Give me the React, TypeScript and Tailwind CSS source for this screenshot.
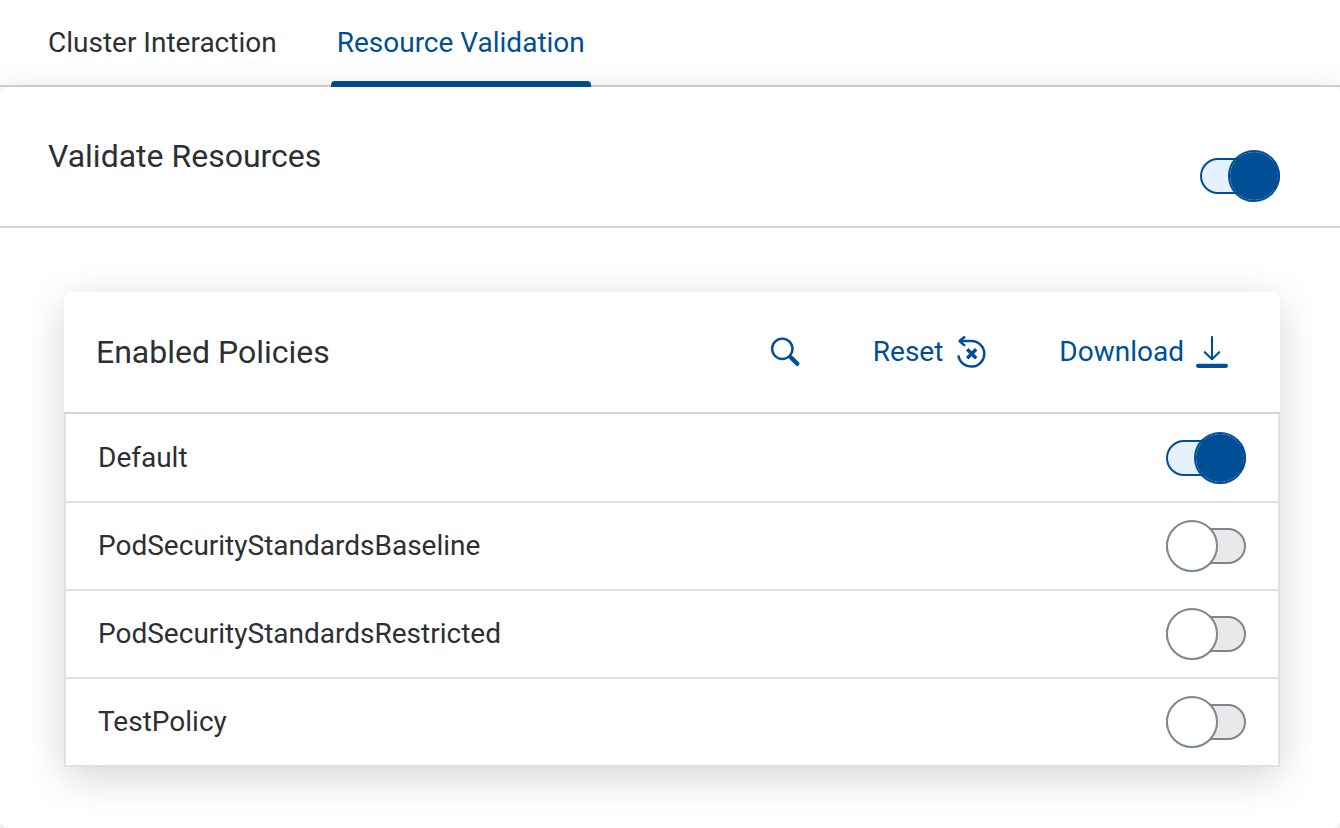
import { useState } from 'react';

const tabs = ['Cluster Interaction', 'Resource Validation'];

const initialPolicies = [
  { name: 'Default', enabled: true },
  { name: 'PodSecurityStandardsBaseline', enabled: false },
  { name: 'PodSecurityStandardsRestricted', enabled: false },
  { name: 'TestPolicy', enabled: false },
];

function SearchIcon() {
  return (
    <svg className="size-8" viewBox="0 0 32 32" fill="none" stroke="currentColor" aria-hidden="true">
      <circle cx="13.3" cy="12.8" r="10.2" strokeWidth="2.4" />
      <path d="M20.5 20.2 23 22.6" strokeWidth="3" />
      <path d="m22.3 21.9 6 5.9" strokeWidth="4.4" strokeLinecap="round" />
    </svg>
  );
}

function ResetIcon() {
  return (
    <svg
      className="size-8"
      viewBox="0 0 32 32"
      fill="none"
      stroke="currentColor"
      strokeWidth="2.5"
      strokeLinecap="round"
      strokeLinejoin="round"
      aria-hidden="true"
    >
      <path d="M3.4 19.4A13 12.8 0 1 0 16.4 5H4.8" strokeLinecap="butt" />
      <path d="M9.2 1.2 4.6 5 9.2 9.2" />
      <path d="m12.2 13.2 9 9M21.2 13.2l-9 9" strokeWidth="3.5" strokeLinecap="butt" />
    </svg>
  );
}

function DownloadIcon() {
  return (
    <svg
      className="size-8"
      viewBox="0 0 32 32"
      fill="none"
      stroke="currentColor"
      strokeWidth="2.1"
      strokeLinecap="round"
      strokeLinejoin="round"
      aria-hidden="true"
    >
      <path d="M16 1v22M8.8 16.2l7.2 7 7.2-7" />
      <path d="M2.1 29.8h27.8" strokeWidth="4.2" />
    </svg>
  );
}

type SwitchProps = {
  id: string;
  checked: boolean;
  onChange: (checked: boolean) => void;
};

function Switch({ id, checked, onChange }: SwitchProps) {
  return (
    <input
      id={id}
      type="checkbox"
      role="switch"
      checked={checked}
      onChange={(event) => onChange(event.target.checked)}
      className="grid h-13 w-20 shrink-0 cursor-pointer appearance-none items-center before:col-start-1 before:row-start-1 before:h-9 before:w-20 before:rounded-full before:border-2 before:border-[#7b8790] before:bg-[#e9e9e9] after:col-start-1 after:row-start-1 after:size-13 after:justify-self-start after:rounded-full after:border-2 after:border-[#7b8790] after:bg-white checked:before:border-[#004f96] checked:before:bg-[#e5f2fd] checked:after:justify-self-end checked:after:border-[#004f96] checked:after:bg-[#004f96] checked:after:bg-clip-padding"
    />
  );
}

export default function App() {
  const [activeTab, setActiveTab] = useState(tabs[1]);
  const [validate, setValidate] = useState(true);
  const [policies, setPolicies] = useState(initialPolicies);

  const setPolicy = (name: string, enabled: boolean) =>
    setPolicies((list) => list.map((p) => (p.name === name ? { ...p, enabled } : p)));

  return (
    <div className="flex min-h-screen flex-col overflow-hidden bg-white font-[Roboto,'Liberation_Sans',sans-serif] text-[28px] leading-9 text-[#2c3034]">
      <div role="tablist" className="flex gap-12 border-b-2 border-[#d4d4d4] px-[42px]">
        {tabs.map((tab) => (
          <button
            key={tab}
            type="button"
            role="tab"
            aria-selected={tab === activeTab}
            onClick={() => setActiveTab(tab)}
            className="group -mb-0.5 flex flex-col aria-selected:text-[#004f96]"
          >
            <span className="px-1.5 pt-[25px] pb-5">{tab}</span>
            <span className="h-1.5 w-full rounded-t group-aria-selected:bg-[#004f96]" />
          </button>
        ))}
      </div>

      <main className="grow rounded-lg bg-white shadow-[0_10px_40px_rgba(0,0,0,0.17)]">
        <div className="flex items-start justify-between border-b-2 border-[#d4d4d4] pr-15 pb-6 pl-12">
          <label htmlFor="validate" className="pt-[49px] text-[32px] leading-10">
            Validate Resources
          </label>
          <div className="pt-[63px]">
            <Switch id="validate" checked={validate} onChange={setValidate} />
          </div>
        </div>

        <section className="mt-16 mr-15 mb-15 ml-16 rounded-t-lg bg-white shadow-[0_10px_40px_rgba(0,0,0,0.17)]">
          <header className="flex items-center justify-between border-b-2 border-[#d4d4d4] py-10 pr-8 pl-8">
            <h2 className="text-[32px] leading-10">Enabled Policies</h2>
            <div className="flex items-center gap-8 text-[#004f96]">
              <button type="button" aria-label="Search" className="px-5">
                <SearchIcon />
              </button>
              <button
                type="button"
                className="flex items-center gap-3 px-5"
                onClick={() => setPolicies(initialPolicies)}
              >
                Reset
                <ResetIcon />
              </button>
              <button type="button" className="flex items-center gap-3 px-5">
                Download
                <DownloadIcon />
              </button>
            </div>
          </header>
          <div className="border-x-2 border-[#e0e0e0] pt-px">
            <table className="w-full border-separate border-spacing-0">
              <tbody>
                {policies.map((policy) => (
                  <tr key={policy.name} className="h-22">
                    <th scope="row" className="border-b-2 border-[#e0e0e0] pl-8 text-left font-normal">
                      <label htmlFor={policy.name}>{policy.name}</label>
                    </th>
                    <td className="w-28 border-b-2 border-[#e0e0e0] pr-8">
                      <Switch
                        id={policy.name}
                        checked={policy.enabled}
                        onChange={(enabled) => setPolicy(policy.name, enabled)}
                      />
                    </td>
                  </tr>
                ))}
              </tbody>
            </table>
          </div>
        </section>
      </main>
    </div>
  );
}
